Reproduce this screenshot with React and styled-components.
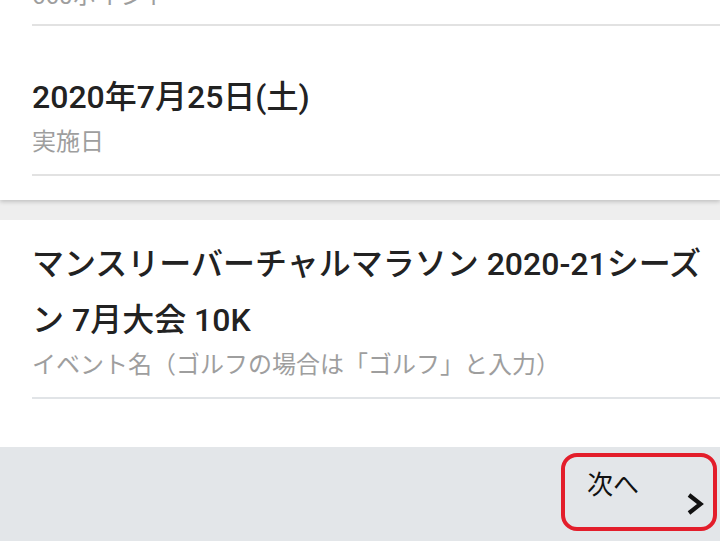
import styled, { createGlobalStyle } from 'styled-components';

const GlobalStyle = createGlobalStyle`
  html, body {
    margin: 0;
    padding: 0;
    background: #ffffff;
    overflow: hidden;
  }
  body {
    font-family: "Roboto", "Noto Sans CJK JP", sans-serif;
  }
`;

const Page = styled.div`
  display: flex;
  flex-direction: column;
  width: 720px;
  height: 541px;
  overflow: hidden;
  background: #eeeeee;
`;

const Card = styled.div`
  display: flex;
  flex-direction: column;
  background: #ffffff;
  padding-left: 32px;
  padding-bottom: ${(p) => p.$bottom || 0}px;
  margin-top: ${(p) => p.$offset || 0}px;
  box-shadow: ${(p) => (p.$shadow ? '0 2px 4px rgba(0, 0, 0, 0.18)' : 'none')};
  position: relative;
  z-index: ${(p) => (p.$shadow ? 1 : 0)};
`;

const Gap = styled.div`
  height: 20px;
  flex-shrink: 0;
  background: #eeeeee;
`;

const Field = styled.div`
  display: flex;
  flex-direction: column;
  padding: ${(p) => p.$top}px 16px ${(p) => p.$bottom}px 0;
  border-bottom: 2px solid ${(p) => p.$line || '#e2e2e2'};
`;

const Value = styled.div`
  font-size: 32px;
  line-height: 56px;
  font-weight: 500;
  color: #222222;
  -webkit-font-smoothing: antialiased;
`;

const Label = styled.div`
  font-size: 24px;
  line-height: 30px;
  margin-top: ${(p) => (p.$first ? 0 : 2)}px;
  color: #9e9e9e;
`;

const Footer = styled.div`
  flex: 1;
  display: flex;
  justify-content: flex-end;
  align-items: flex-start;
  padding: 6px 3px 0 0;
  background: #e3e6e9;
`;

const NextButton = styled.button`
  display: flex;
  align-items: flex-start;
  width: 156px;
  height: 78px;
  padding: 0;
  border: 4px solid #e31e2b;
  border-radius: 16px;
  background: transparent;
  font-family: "Roboto", "Noto Sans CJK JP", sans-serif;
  cursor: pointer;
`;

const NextText = styled.span`
  margin: 15px 0 0 22px;
  font-size: 26px;
  line-height: 26px;
  color: #111111;
`;

const Chevron = styled.svg`
  margin: 34px 8px 0 auto;
  flex-shrink: 0;
`;

export default function App() {
  return (
    <>
      <GlobalStyle />
      <Page>
        <Card $shadow $bottom={24} $offset={-19}>
          <Field $top={0} $bottom={13}>
            <Label $first>660ポイント</Label>
          </Field>
          <Field $top={43} $bottom={17}>
            <Value>2020年7月25日(土)</Value>
            <Label>実施日</Label>
          </Field>
        </Card>
        <Gap />
        <Card $bottom={48}>
          <Field $top={16} $bottom={17} $line="#e1e4e7">
            <Value>マンスリーバーチャルマラソン 2020-21シーズン 7月大会 10K</Value>
            <Label>イベント名（ゴルフの場合は「ゴルフ」と入力）</Label>
          </Field>
        </Card>
        <Footer>
          <NextButton>
            <NextText>次へ</NextText>
            <Chevron width="20" height="26" viewBox="0 0 20 26">
              <path d="M4 4 L15.5 13 L4 22" fill="none" stroke="#111" strokeWidth="4.2" strokeLinejoin="miter" />
            </Chevron>
          </NextButton>
        </Footer>
      </Page>
    </>
  );
}
